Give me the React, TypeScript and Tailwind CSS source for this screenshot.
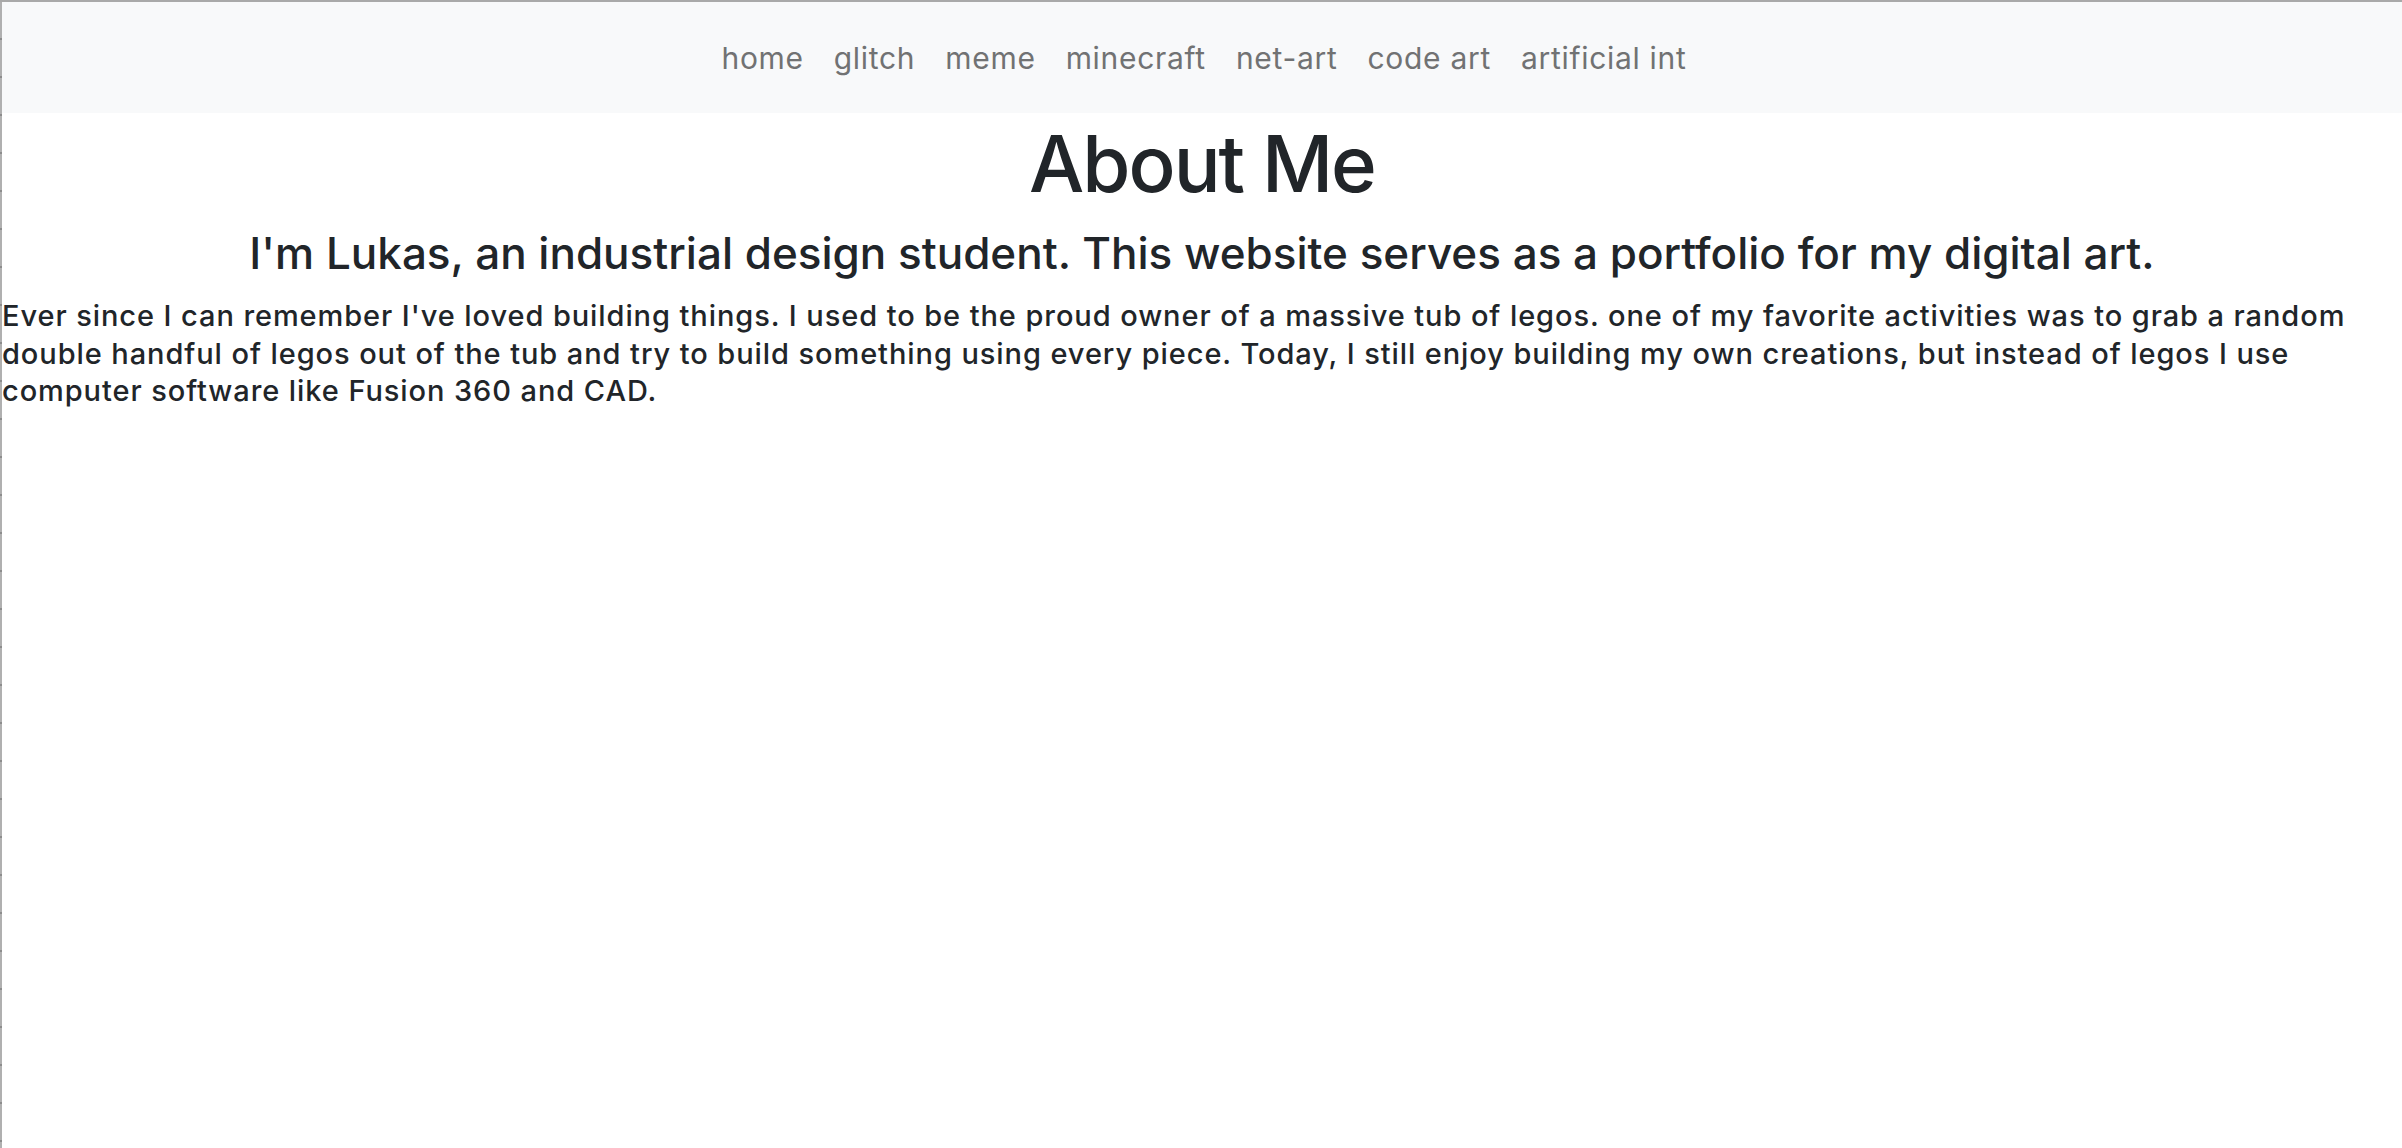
export default function App() {
  const links = ["home", "glitch", "meme", "minecraft", "net-art", "code art", "artificial int"];
  return (
    <div className="min-h-[1148px] bg-white border-t-2 border-[#a9a9a9] flex font-['Inter','Liberation_Sans',sans-serif] text-[#212529]">
      <div className="w-[2px] shrink-0 bg-[repeating-linear-gradient(to_bottom,#b0b0b0_0px,#b0b0b0_36px,#8c8c8c_36px,#8c8c8c_38px)]" />
      <div className="flex-1 min-w-0">
        <nav className="h-[111px] bg-[#f8f9fa] flex items-center justify-center pl-[4px]">
          {links.map((l) => (
            <a key={l} className="px-[15px] text-[30px] tracking-[0.7px] leading-[40px] text-[#717273] whitespace-nowrap">
              {l}
            </a>
          ))}
        </nav>
        <h1 className="mt-[4px] text-center text-[78px] tracking-[-2px] leading-[94px] font-medium">About Me</h1>
        <h3 className="mt-[16px] text-center text-[44px] leading-[53px] font-medium">
          I'm Lukas, an industrial design student. This website serves as a portfolio for my digital art.
        </h3>
        <p className="mt-[17px] text-[29px] tracking-[0.92px] leading-[37.5px] font-medium">
          Ever since I can remember I've loved building things. I used to be the proud owner of a massive tub of legos. one of my favorite activities was to grab a random double handful of legos out of the tub and try to build something using every piece. Today, I still enjoy building my own creations, but instead of legos I use computer software like Fusion 360 and CAD.
        </p>
      </div>
    </div>
  );
}
